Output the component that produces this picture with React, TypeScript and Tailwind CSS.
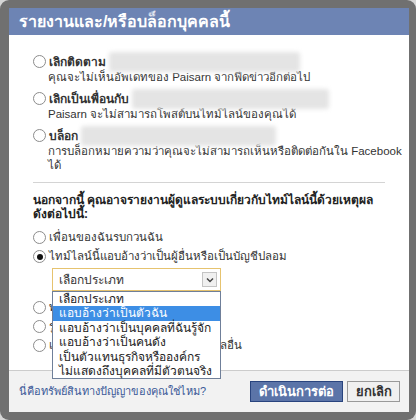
import React from "react";

const font = { fontFamily: '"Liberation Sans", "Noto Sans", sans-serif' };

function Radio({ checked = false }: { checked?: boolean }) {
  return (
    <span className="w-[13px] h-[13px] rounded-full border border-[#8c8c8c] bg-white flex items-center justify-center shrink-0">
      {checked && <span className="w-[6px] h-[6px] rounded-full bg-[#111]" />}
    </span>
  );
}

function Blur({ w }: { w: number }) {
  return (
    <div
      className="h-[20px] bg-[#e4e4e4] blur-[2px] rounded-[3px] shrink-0"
      style={{ width: w }}
    />
  );
}

const options = [
  {
    title: "เลิกติดตาม",
    blur: 191,
    sub: ["คุณจะไม่เห็นอัพเดทของ Paisarn จากฟีดข่าวอีกต่อไป"],
  },
  {
    title: "เลิกเป็นเพื่อนกับ",
    blur: 197,
    sub: ["Paisarn จะไม่สามารถโพสต์บนไทม์ไลน์ของคุณได้"],
  },
  {
    title: "บล็อก",
    blur: 195,
    sub: ["การบล็อกหมายความว่าคุณจะไม่สามารถเห็นหรือติดต่อกันใน Facebook", "ได้"],
  },
];

const types = [
  "เลือกประเภท",
  "แอบอ้างว่าเป็นตัวฉัน",
  "แอบอ้างว่าเป็นบุคคลที่ฉันรู้จัก",
  "แอบอ้างว่าเป็นคนดัง",
  "เป็นตัวแทนธุรกิจหรือองค์กร",
  "ไม่แสดงถึงบุคคลที่มีตัวตนจริง",
];

export default function App() {
  return (
    <div className="w-[416px] h-[420px] bg-[#d6d6d6] overflow-hidden" style={font}>
      <div className="w-[416px] h-[420px] rounded-[9px] bg-[#707070] pt-[8px] pl-[9px]">
        <div className="w-[400px] h-[404px] bg-white flex flex-col text-[#333] text-[11.5px]">
          <div className="h-[27px] bg-[#6d84b4] text-white font-bold text-[16px] leading-[27px] pl-[10px]">
            รายงานและ/หรือบล็อกบุคคลนี้
          </div>

          <div className="flex-1 px-[24px] pt-[18px] relative">
            {options.map((o) => (
              <div key={o.title} className="mb-[6px] last:mb-0">
                <div className="flex items-center h-[17px]">
                  <Radio />
                  <span className="font-bold ml-[3px] text-[12px]">{o.title}</span>
                  <div className="ml-[3px]">
                    <Blur w={o.blur} />
                  </div>
                </div>
                <div className="pl-[15px] leading-[14px] whitespace-nowrap">
                  {o.sub.map((s) => (
                    <div key={s}>{s}</div>
                  ))}
                </div>
              </div>
            ))}

            <div className="mt-[10px] border-t border-[#d4d4d4]" />

            <div className="mt-[10px] font-bold text-[12px] leading-[14px] text-[#222]">
              นอกจากนี้ คุณอาจรายงานผู้ดูแลระบบเกี่ยวกับไทม์ไลน์นี้ด้วยเหตุผล
              ดังต่อไปนี้:
            </div>

            <div className="mt-[7px]">
              <div className="flex items-center h-[19px] gap-[3px]">
                <Radio />
                <span>เพื่อนของฉันรบกวนฉัน</span>
              </div>
              <div className="flex items-center h-[19px] gap-[3px]">
                <Radio checked />
                <span>ไทม์ไลน์นี้แอบอ้างว่าเป็นผู้อื่นหรือเป็นบัญชีปลอม</span>
              </div>

              <div className="relative ml-[19px] mt-[2px] w-[169px] text-[12px]">
                <div className="h-[23px] border border-[#e6c36f] bg-white flex items-center justify-between pl-[6px] pr-[3px]">
                  <span>เลือกประเภท</span>
                  <span className="w-[15px] h-[15px] border border-[#c4c4c4] bg-[#f0f0f0] flex items-center justify-center">
                    <svg width="8" height="6" viewBox="0 0 8 6">
                      <path d="M1 1.5 L4 4.5 L7 1.5" stroke="#444" strokeWidth="1.5" fill="none" />
                    </svg>
                  </span>
                </div>
                <div className="absolute left-0 top-[23px] w-[169px] border border-[#6f7f99] bg-white z-10">
                  {types.map((t, i) => (
                    <div
                      key={t}
                      className={
                        "h-[14.4px] leading-[14.4px] pl-[6px] " +
                        (i === 1 ? "bg-[#3d8ee5] text-white" : "text-[#222]")
                      }
                    >
                      {t}
                    </div>
                  ))}
                </div>
              </div>

              <div className="mt-[7px]">
                <div className="flex items-center h-[19px] gap-[3px]">
                  <Radio />
                  <span>ทำร้ายร่างกายหรือข่มขู่</span>
                </div>
                <div className="flex items-center h-[19px] gap-[3px]">
                  <Radio />
                  <span>รูปภาพโปรไฟล์ไม่เหมาะสม</span>
                </div>
                <div className="flex items-center h-[19px] gap-[3px]">
                  <Radio />
                  <span>เนื้อหาแสดงความเกลียดชังต่อบุคคลอื่น</span>
                </div>
              </div>
            </div>
          </div>

          <div className="h-[42px] bg-[#f2f2f2] border-t border-[#cccccc] flex items-center pl-[10px] pr-[9px]">
            <a className="text-[#3b5998] text-[11px]">นี่คือทรัพย์สินทางปัญญาของคุณใช่ไหม?</a>
            <div className="ml-auto flex gap-[4px]">
              <button className="w-[93px] h-[21px] bg-[#5b74a8] border border-[#29447e] text-white font-bold text-[13px] leading-[19px]">
                ดำเนินการต่อ
              </button>
              <button className="w-[53px] h-[21px] bg-[#f0f0f0] border border-[#999] text-[#333] font-bold text-[13px] leading-[19px]">
                ยกเลิก
              </button>
            </div>
          </div>
        </div>
      </div>
    </div>
  );
}
